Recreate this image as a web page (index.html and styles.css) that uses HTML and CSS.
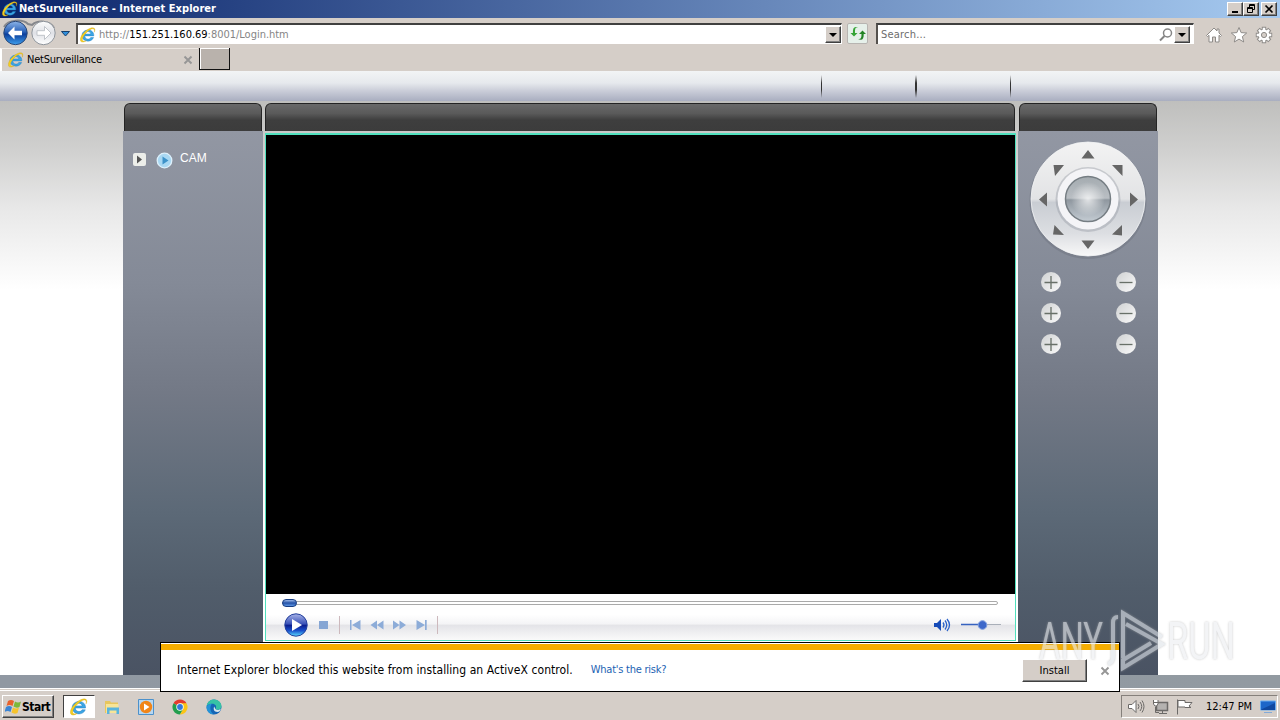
FILE: index.html
```html
<!DOCTYPE html>
<html lang="en">
<head>
<meta charset="utf-8">
<title>NetSurveillance</title>
<link rel="stylesheet" href="styles.css">
</head>
<body>
<svg class="defs" width="0" height="0">
  <defs>
    <linearGradient id="gBlue" x1="0" y1="0" x2="0" y2="1"><stop offset="0" stop-color="#8db4e8"/><stop offset=".45" stop-color="#2a62b8"/><stop offset=".55" stop-color="#0c3f9c"/><stop offset="1" stop-color="#3fa0ee"/></linearGradient>
    <linearGradient id="gGrey" x1="0" y1="0" x2="0" y2="1"><stop offset="0" stop-color="#fdfdfd"/><stop offset=".5" stop-color="#dfe1e6"/><stop offset="1" stop-color="#fff"/></linearGradient>
    <linearGradient id="gPad" x1="0" y1="0" x2="0" y2="1"><stop offset="0" stop-color="#f3f3f3"/><stop offset=".5" stop-color="#e2e3e5"/><stop offset=".53" stop-color="#c9cdd3"/><stop offset=".8" stop-color="#dcdee2"/><stop offset="1" stop-color="#f8f8f8"/></linearGradient>
    <linearGradient id="gBall" x1="0" y1="0" x2="0" y2="1"><stop offset="0" stop-color="#a4abb0"/><stop offset=".48" stop-color="#b9bec3"/><stop offset=".52" stop-color="#8f979f"/><stop offset="1" stop-color="#c4ccd3"/></linearGradient>
    <radialGradient id="gShine"><stop offset="0" stop-color="#fff" stop-opacity=".75"/><stop offset="1" stop-color="#fff" stop-opacity="0"/></radialGradient>
    <linearGradient id="gKnob" x1="0" y1="0" x2="1" y2="1"><stop offset="0" stop-color="#cfd1d2"/><stop offset="1" stop-color="#fafafa"/></linearGradient>
    <linearGradient id="gPlay" x1="0" y1="0" x2="0" y2="1"><stop offset="0" stop-color="#a8b4e8"/><stop offset=".45" stop-color="#3a52b8"/><stop offset=".52" stop-color="#0c1f90"/><stop offset=".75" stop-color="#1a50cc"/><stop offset="1" stop-color="#5ce0ff"/></linearGradient>
    <symbol id="ie" viewBox="0 0 16 16">
      <path d="M13.800 8.900H4.700c.2 3.600 5 4 6 1.600h2.900C11.600 16 2 15.200 2 8.500 2 1.300 14.300.9 13.800 8.900zM4.800 7h6C10.400 3.800 5.200 3.800 4.800 7z" fill="#3aa5e4" stroke="#1976bd" stroke-width=".4"/>
      <path d="M14.300 5.200C16.500.4 12.500-.6 7.600 2.600 2.200 6.200-.8 11.700.8 14.300c1 1.500 3.600.7 5.500-.6-2.100.8-3.900.6-3.900-1.200C2.400 8.500 9.600 1.600 13 1.700c1.500.1 1.600 1.700 1.300 3.500z" fill="#f4cf20" stroke="#c99c13" stroke-width=".3"/>
    </symbol>
    <symbol id="plus" viewBox="0 0 22 22"><circle cx="11" cy="11" r="10" fill="url(#gKnob)"/><path d="M4.500 11.500h13M11 5v13" stroke="#687068" stroke-width="1.300"/></symbol>
    <symbol id="minus" viewBox="0 0 22 22"><circle cx="11" cy="11" r="10" fill="url(#gKnob)"/><path d="M4.500 11.500h13" stroke="#687068" stroke-width="1.300"/></symbol>
    <symbol id="cross" viewBox="0 0 10 10"><path d="M1.500 1.500l7 7M8.500 1.500l-7 7" stroke="#969696" stroke-width="1.900"/></symbol>
  </defs>
</svg>

<div class="screen">
  <header class="titlebar">
    <svg class="titlebar-icon"><use href="#ie"/></svg>
    <span class="titlebar-text">NetSurveillance - Internet Explorer</span>
    <div class="window-buttons">
      <span class="win-btn"><svg width="12" height="10"><path d="M3 8h6" stroke="#000" stroke-width="2"/></svg></span>
      <span class="win-btn"><svg width="12" height="10"><path d="M4.500 3V.5h5v5H8M4 1.500h6M2.500 3.500h5v5h-5zM2 4.500h6" fill="none" stroke="#000"/></svg></span>
      <span class="win-btn win-close"><svg width="12" height="10"><path d="M2.500 1.500l7 7M9.500 1.500l-7 7" stroke="#000" stroke-width="1.700"/></svg></span>
    </div>
  </header>

  <nav class="navbar">
    <svg class="history" width="76" height="30" viewBox="0 0 76 30">
      <path d="M4 9C8 1 23 1 28 6l4 1c5-5 18-5 22 3" fill="none" stroke="#85878c" stroke-width="2"/>
      <circle cx="15.500" cy="15" r="11.700" fill="url(#gBlue)" stroke="#2a4776" stroke-width="1"/>
      <path d="M8 15l6.500-6.500v4.200H22v4.600h-7.500v4.200z" fill="#fff"/>
      <circle cx="43.500" cy="15" r="11.700" fill="url(#gGrey)" stroke="#8f959c"/>
      <path d="M51 15l-6.500-6.500v4.200H37v4.600h7.500v4.200z" fill="#fff" stroke="#b4b9bf" stroke-width=".8"/>
      <path d="M61.500 13.500h8L65.500 18z" fill="#2f8fdc" stroke="#17406d"/>
    </svg>
    <div class="address">
      <svg class="icon-16"><use href="#ie"/></svg>
      <span class="address-text">http://<b>151.251.160.69</b>:8001/Login.htm</span>
      <span class="drop-btn"></span>
    </div>
    <span class="go-btn"><svg width="16" height="16" viewBox="0 0 16 16"><path d="M7.500 2.500C4.500 2 4.500 4 4.500 8H7L3.500 11.500 0 8h2.400C2.200 3 3.500 1 7.500 2.500z" transform="translate(.5 -1)" fill="#35a436"/><path d="M8 13c3 .5 3.500-1 3.500-5H9l3.500-3.500L16 8h-2.300c.2 5-1.500 7-5.700 5z" fill="#228425"/></svg></span>
    <div class="search">
      <span class="search-text">Search...</span>
      <svg width="16" height="16" viewBox="0 0 16 16"><circle cx="9.500" cy="6" r="4" fill="none" stroke="#858585" stroke-width="1.500"/><path d="M6.500 9L2 13.500" stroke="#858585" stroke-width="2"/></svg>
      <span class="drop-btn"></span>
    </div>
    <div class="nav-tools">
      <svg width="18" height="18" viewBox="0 0 18 18"><path d="M9 2L1.500 9.500l1 1L4 9.300V16h3.500v-5h3v5H14V9.300l1.500 1.200 1-1L14 7V3h-2v2z" fill="#fff" stroke="#8e8b88"/></svg>
      <svg width="18" height="18" viewBox="0 0 18 18"><path d="M9 1.500l2.100 5.100 5.600.4-4.300 3.600 1.300 5.400L9 13.100 4.300 16l1.300-5.400L1.300 7l5.600-.4z" fill="#fff" stroke="#8e8b88"/></svg>
      <svg width="18" height="18" viewBox="0 0 18 18">
        <g stroke="#8e8b88" stroke-width="4.400"><path d="M9 .8v16.400M.8 9h16.400M3.200 3.200l11.600 11.600M14.800 3.200L3.200 14.800"/></g>
        <circle cx="9" cy="9" r="6.300" fill="#8e8b88"/>
        <g stroke="#fff" stroke-width="2.500"><path d="M9 1.700v14.600M1.700 9h14.600M3.900 3.900l10.200 10.200M14.100 3.900L3.900 14.100"/></g>
        <circle cx="9" cy="9" r="5.400" fill="#fff"/><circle cx="9" cy="9" r="2.600" fill="#d5cec8" stroke="#8e8b88"/>
      </svg>
    </div>
  </nav>

  <div class="tabs">
    <div class="tab">
      <svg class="icon-16"><use href="#ie"/></svg>
      <span class="tab-text">NetSurveillance</span>
      <svg class="tab-close"><use href="#cross"/></svg>
    </div>
    <span class="new-tab"></span>
  </div>

  <main class="page">
    <div class="page-head"><i></i><i class="strong"></i><i></i></div>
    <div class="columns">
      <section class="side side-left">
        <div class="cap"></div>
        <div class="cam">
          <span class="expander"><svg width="13" height="13"><path d="M4 2.500v8l5-4z" fill="#555"/></svg></span>
          <svg class="cam-icon" width="17" height="17" viewBox="0 0 17 17"><circle cx="8.500" cy="8.500" r="7.300" fill="#a9d8f3" stroke="#def1fc" stroke-width="1.300"/><path d="M6.500 4.500v8l6-4z" fill="#3d92c9"/></svg>
          <span>CAM</span>
        </div>
      </section>
      <section class="center">
        <div class="cap"></div>
        <div class="player">
          <div class="video"></div>
          <div class="controls">
            <div class="seek"><span class="seek-thumb"></span></div>
            <svg class="buttons" width="180" height="28" viewBox="0 0 180 28">
              <circle cx="16" cy="14" r="11.200" fill="url(#gPlay)" stroke="#24409c"/><path d="M12 8v12l10-6z" fill="#fff"/>
              <path d="M39 10h9v8h-9z" fill="#86a6d4"/>
              <path d="M59.500 5v18M157.500 5v18" stroke="#cdb9bd"/>
              <g fill="#8dacd8"><path d="M70 9h1.500v10H70zM72 14l8.500-5v10zM90.500 14l6.500-4.500v9zM97 14l6.500-4.500v9zM113 9.500v9l6.500-4.500zM119.500 9.500v9l6.500-4.500zM136.500 9v10l8.500-5zM145 9h1.700v10H145z"/></g>
            </svg>
            <svg class="volume" width="72" height="20" viewBox="0 0 72 20">
              <path d="M1 8h3l4-4v12l-4-4H1z" fill="#164bb8"/><path d="M10 7.500q2 2.500 0 5M12 5.500q3.500 4.500 0 9M14 4q5 6 0 12" fill="none" stroke="#2b62c9" stroke-width="1.300"/>
              <path d="M28 9.500h40" stroke="#a9afb9"/><path d="M28 9.500h21" stroke="#3763c0" stroke-width="1.500"/><circle cx="49.500" cy="10" r="4.300" fill="#3e68ca" stroke="#7e9ddd"/>
            </svg>
          </div>
        </div>
      </section>
      <section class="side side-right">
        <div class="cap"></div>
        <svg class="ptz" width="130" height="130" viewBox="0 0 130 130">
          <circle cx="65" cy="65.500" r="58.500" fill="#656b76" opacity=".35"/>
          <circle cx="65" cy="64" r="57" fill="url(#gPad)" stroke="#f3f4f5" stroke-width=".8"/>
          <circle cx="65" cy="64.500" r="32.500" fill="#9296a0" opacity=".4"/>
          <circle cx="65" cy="64" r="30.500" fill="#f4f4f7"/>
          <circle cx="65" cy="64" r="22.500" fill="url(#gBall)" stroke="#757d83" stroke-width="1.500"/>
          <circle cx="65" cy="64" r="17" fill="url(#gShine)"/>
          <g fill="#666"><path d="M65 15l6.500 8.500h-13zM65 114l6.500-8.500h-13zM16 64.500l8-7v14zM115 64.500l-8-7v14zM30.500 30H41l-9 11zM99.500 41V30H89zM31.500 90l9.500 10-11-.5zM99 90v10.500L89 99.500z"/></g>
        </svg>
        <div class="zoom-pad">
          <svg><use href="#plus"/></svg><svg><use href="#minus"/></svg>
          <svg><use href="#plus"/></svg><svg><use href="#minus"/></svg>
          <svg><use href="#plus"/></svg><svg><use href="#minus"/></svg>
        </div>
      </section>
    </div>
    <div class="page-foot"></div>
  </main>

  <footer class="taskbar">
    <div class="start">
      <svg width="17" height="16" viewBox="0 0 17 16"><path d="M3 2q3-2 6 0L7.500 7q-3-2-6 0z" fill="#e8622c"/><path d="M10 2.500q3 2 6 0L14.500 8q-3 1.500-6-.5z" fill="#7db83a"/><path d="M1 8q3-2 6 0l-1.500 5q-3-2-6 0z" fill="#3a84d4"/><path d="M8 8.500q3 2 6 0L12.500 14q-3 1.500-6-.5z" fill="#f6c32c"/></svg>
      <span>Start</span>
    </div>
    <div class="quick active"><svg width="18" height="18"><use href="#ie"/></svg></div>
    <div class="quick"><svg width="16" height="16" viewBox="0 0 16 16"><path d="M1 2h5l1 1.500h7V14H1z" fill="#e7c65e"/><path d="M2 5h12.500v9H2z" fill="#f7e497"/><path d="M3 15V8.500h12V15h-2.500v-3.500h-7V15z" fill="#58b4de"/></svg></div>
    <div class="quick"><svg width="16" height="16" viewBox="0 0 16 16"><path d="M.5.500h15v15H.5z" fill="#b7d7f1" stroke="#4c91cb"/><circle cx="8" cy="8" r="6.200" fill="#f18518"/><path d="M6 4.500v7L11.500 8z" fill="#fff"/></svg></div>
    <div class="quick"><svg width="16" height="16" viewBox="0 0 16 16"><path d="M8 8L1.500 4.250A7.500 7.500 0 0 1 14.500 4.250z" fill="#e33b2e"/><path d="M8 8L1.500 4.250A7.500 7.500 0 0 0 8 15.500l3.300-5.500z" fill="#219e4e"/><path d="M8 8V4.250h6.500A7.500 7.500 0 0 1 8 15.500l3.300-5.500z" fill="#fbc516"/><circle cx="8" cy="8" r="3.700" fill="#fff"/><circle cx="8" cy="8" r="2.900" fill="#3278dc"/></svg></div>
    <div class="quick"><svg width="16" height="16" viewBox="0 0 16 16"><circle cx="8" cy="8" r="7.500" fill="#1565b5"/><path d="M.6 7C1.500 2 5 .5 8 .5c5 0 8 4 7.400 7.500-.5 3-4.500 3.500-6 2 2-3-.5-5.500-3.400-5.300C3.500 4.700 1.500 5.700.6 7z" fill="#36c2a5"/><path d="M.6 8C1.500 5.200 4 4.500 6 4.700 3.500 7 3.800 13 8 15.500 3.500 15.500.3 12 .6 8z" fill="#2493d7"/><path d="M9.400 10c1.500 1.500 4.800 1.200 5.800-.2-.5 1.700-2 3.200-3.700 3.200C8 13 7 10 8.200 7.500z" fill="#d8e5ec"/></svg></div>
    <div class="tray">
      <svg class="tray-icons" width="70" height="18" viewBox="0 0 70 18">
        <g fill="#fff" stroke="#6c6a68"><path d="M2.500 6.500H6l4-4v12l-4-4H2.500z"/><path d="M12 6q2 2.500 0 5M14 4q3.500 4.500 0 9M16 2.500q4 6 0 12" fill="none"/><path d="M30.500 4.500h11v8h-11z" fill="#b4b2b0" stroke-width="1.500"/><path d="M33 15.500h8M36.500 13v2M29.500 9v5.500H33" fill="none"/><path d="M27.500 2v4l1.500 2h1.500L32 6V2M27.500 4.500H32" /><path d="M51.500 1.500v15M52 2.500h7v2h7l-3 3.500 2 1.500h-6V9h-7z"/></g>
      </svg>
      <span class="clock">12:47 PM</span>
      <svg width="16" height="14" viewBox="0 0 16 14"><path d="M.5 1h15v9H.5z" fill="#1d66c9" stroke="#6bacf0"/><path d="M1 9.500L15 3v7H1z" fill="#1048a0"/><path d="M4 12.500h8" stroke="#83aad7"/></svg>
    </div>
  </footer>

  <div class="notice">
    <span class="notice-text">Internet Explorer blocked this website from installing an ActiveX control.</span>
    <span class="notice-link">What's the risk?</span>
    <span class="install"><span>Install</span></span>
    <svg class="notice-close"><use href="#cross"/></svg>
  </div>

  <svg class="watermark" width="230" height="76" viewBox="0 0 230 76">
    <text x="8" y="53.500" textLength="64" lengthAdjust="spacingAndGlyphs">ANY</text>
    <text x="136" y="53.500" textLength="68" lengthAdjust="spacingAndGlyphs">RUN</text>
    <path d="M87 12c-4 0-5 2-5 6v34c0 4-2 6-5 7M92 53V8l39 24M95 19l36 20-39 24v-8l28-17"/>
  </svg>
</div>
</body>
</html>
```
FILE: styles.css
```css
* { box-sizing: border-box; }
body { margin: 0; font: 11px/14px "DejaVu Sans Condensed", "DejaVu Sans", sans-serif; font-stretch: condensed; color: #000; }
svg { display: block; flex: none; }
.defs { position: absolute; }
.screen { position: relative; width: 1280px; height: 720px; display: flex; flex-direction: column; overflow: hidden; background: #d5cec8; white-space: nowrap; }

.titlebar { height: 18px; flex: none; display: flex; align-items: center; padding: 0 2px; background: linear-gradient(90deg, #0a246a, #a6caf0); }
.titlebar-icon { width: 16px; height: 16px; }
.titlebar-text { margin-left: 1px; color: #fff; font-weight: bold; letter-spacing: .05px; }
.window-buttons { margin-left: auto; display: flex; padding-right: 1px; }
.win-btn { width: 16px; height: 14px; display: flex; align-items: center; justify-content: center; background: #d5cec8; border: 1px solid; border-color: #fff #404040 #404040 #fff; box-shadow: inset -1px -1px #808080; }
.win-close { margin-left: 2px; }

.navbar { height: 30px; flex: none; display: flex; align-items: flex-start; }
.address, .search { height: 21px; margin-top: 5px; display: flex; align-items: center; background: #fff; border-top: 2px solid #404040; border-left: 2px solid #55514e; border-right: 1px solid #fff; }
.address { width: 766px; padding-left: 2px; }
.icon-16 { width: 16px; height: 16px; }
.address-text { margin-left: 3px; color: #858585; letter-spacing: -.02px; }
.address-text b { font-weight: normal; color: #000; }
.drop-btn { width: 16px; height: 17px; margin-left: auto; display: flex; align-items: center; justify-content: center; background: #d5cec8; border: 1px solid; border-color: #fff #404040 #404040 #fff; box-shadow: inset -1px -1px #808080; }
.drop-btn::before { content: ""; border: 4px solid transparent; border-top-color: #000; border-bottom: 0; }
.go-btn { width: 21px; height: 21px; margin: 5px 0 0 5px; padding: 2px; background: #e6f0ea; border: 1px solid #b7b4b1; border-radius: 2px; }
.search { width: 318px; margin-left: 8px; padding-right: 3px; }
.search-text { margin-left: 3px; margin-right: auto; color: #6d6d6d; letter-spacing: .2px; }
.search .drop-btn { margin-left: 0; }
.nav-tools { display: flex; gap: 7px; margin: 8px 0 0 11px; }

.tabs { height: 23px; flex: none; display: flex; }
.tab { width: 198px; height: 23px; display: flex; align-items: center; padding-left: 6px; border-left: 2px solid #fff; border-top: 1px solid #eee9e4; }
.tab-text { margin-left: 3px; letter-spacing: -.22px; }
.tab-close { width: 10px; height: 10px; margin: 0 5px 0 auto; }
.new-tab { width: 31px; height: 22px; margin-left: 1px; background: #b9b2ac; border: solid #111; border-width: 0 1px 1px 1px; box-shadow: inset 1px 1px #fff; }

.page { height: 617px; flex: none; display: flex; flex-direction: column; background: #fff; }
.page-head { height: 30px; flex: none; display: flex; gap: 94px; padding: 4px 0 0 821px; background: linear-gradient(#f2f4f5, #e6e9ed 40%, #cbced9 65%, #a9aec0); }
.page-head i { width: 1px; height: 23px; background: linear-gradient(transparent, #333 35%, #333 65%, transparent); }
.page-head .strong { width: 2px; margin: 0 -1px 0 -1px; }
.columns { height: 574px; display: flex; padding: 2px 0 0 123px; background: linear-gradient(#bfbfbd, #d0d0cf 26%, #e8e8e8 57%, #fff) no-repeat 0 0 / 100% 189px; }
.side { width: 140px; height: 572px; display: flex; flex-direction: column; background: linear-gradient(#9297a3, #848a97 28%, #737986 48%, #5c6977 70%, #515d6b 84%, #4a5363) no-repeat 0 28px / 100% 544px; }
.cap { height: 28px; flex: none; border: 1px solid #242424; border-bottom: 0; border-radius: 6px 6px 0 0; background: linear-gradient(#696969, #5a5a5a 35%, #3e3e3e 60%, #3c3c3c); }
.side .cap { margin: 0 1px; }
.cam { display: flex; align-items: flex-start; padding: 20px 0 0 10px; color: #fff; font: 12px/14px "Liberation Sans", sans-serif; }
.cam > span:last-child { margin-left: 7px; }
.expander { width: 13px; height: 13px; margin-top: 2px; background: #eceeea; border-radius: 2px; }
.cam-icon { margin: 1px 0 0 10px; }

.center { width: 752px; margin: 0 2px 0 1px; display: flex; flex-direction: column; }
.center .cap { margin: 0 1px 0 1px; }
.player { height: 508px; margin: 2px 0 0 1px; flex: none; display: flex; flex-direction: column; border: 1px solid #4fe0bd; border-top-width: 2px; background: #fff; }
.video { height: 459px; flex: none; background: #000; }
.controls { flex: 1; display: flex; flex-wrap: wrap; align-content: flex-start; justify-content: space-between; background: linear-gradient(#fff 45%, #f4f4f6 65%, #e4e4e8 68%, #fafafa); padding: 7px 13px 0 16px; }
.seek { width: 716px; height: 4px; border: 1px solid #a9a9a9; border-radius: 2px; background: #fff; }
.seek-thumb { display: block; width: 15px; height: 8px; margin: -3px 0 0 -1px; border: 1px solid #163d83; border-radius: 4px; background: linear-gradient(#9bb8e9, #2451a6 50%, #5d95e3); }
.buttons { margin: 6px 0 0 -2px; }
.volume { margin: 10px -3px 0 0; }

.ptz { margin: 4px 0 0 5px; }
.zoom-pad { display: grid; grid-template-columns: 22px 22px; column-gap: 53px; row-gap: 9px; margin: 6px 0 0 22px; }
.zoom-pad svg { width: 22px; height: 22px; }
.page-foot { height: 13px; background: linear-gradient(90deg, #9098a2, #929aa1); }

.taskbar { height: 32px; flex: none; display: flex; align-items: flex-start; padding: 6px 2px 0; border-top: 1px solid #fff; box-shadow: inset 0 1px #d5cec8, inset 0 2px #fff; }
.start { width: 52px; height: 23px; display: flex; align-items: center; padding-left: 2px; border: 1px solid; border-color: #fff #404040 #404040 #fff; box-shadow: inset -1px -1px #808080; }
.start span { font-weight: bold; font-size: 12px; letter-spacing: -.5px; padding-top: 1px; }
.quick { width: 32px; height: 23px; margin-left: 2px; display: flex; align-items: center; justify-content: center; }
.quick.active { margin-left: 9px; margin-right: -1px; background: #fff; border: 1px solid; border-color: #404040 #fff #fff #404040; }
.tray { width: 157px; height: 23px; margin-left: auto; display: flex; align-items: center; border: 1px solid; border-color: #85807b #fff #fff #85807b; }
.tray-icons { margin-left: 4px; }
.clock { margin-left: 10px; padding-top: 1px; }
.clock + svg { margin-left: auto; margin-right: 1px; }

.notice { position: absolute; left: 160px; top: 642px; width: 960px; height: 50px; display: flex; align-items: center; padding: 5px 9px 0 16px; background: linear-gradient(#fff 1px, #f5ad00 1px, #f5ad00 7px, #fff 7px); border: 1px solid #000; }
.notice-text { font-size: 12px; letter-spacing: .065px; }
.notice-link { margin: 1px 0 0 18px; color: #1c63b3; letter-spacing: -.25px; }
.install { width: 65px; height: 23px; margin-left: auto; margin-top: 1px; padding-top: 2px; display: flex; align-items: center; justify-content: center; background: #d5cec8; border: 1px solid; border-color: #fff #404040 #404040 #fff; box-shadow: inset -1px -1px #808080; }
.notice-close { width: 10px; height: 10px; margin: 2px 0 0 13px; }

.watermark { position: absolute; left: 1031px; top: 605px; opacity: .62; filter: drop-shadow(0 0 1px #aaa); }
.watermark text { font: 400 51px Roboto, sans-serif; fill: #eceef1; }
.watermark path { fill: none; stroke: #dfe4ea; stroke-width: 4; }
```
